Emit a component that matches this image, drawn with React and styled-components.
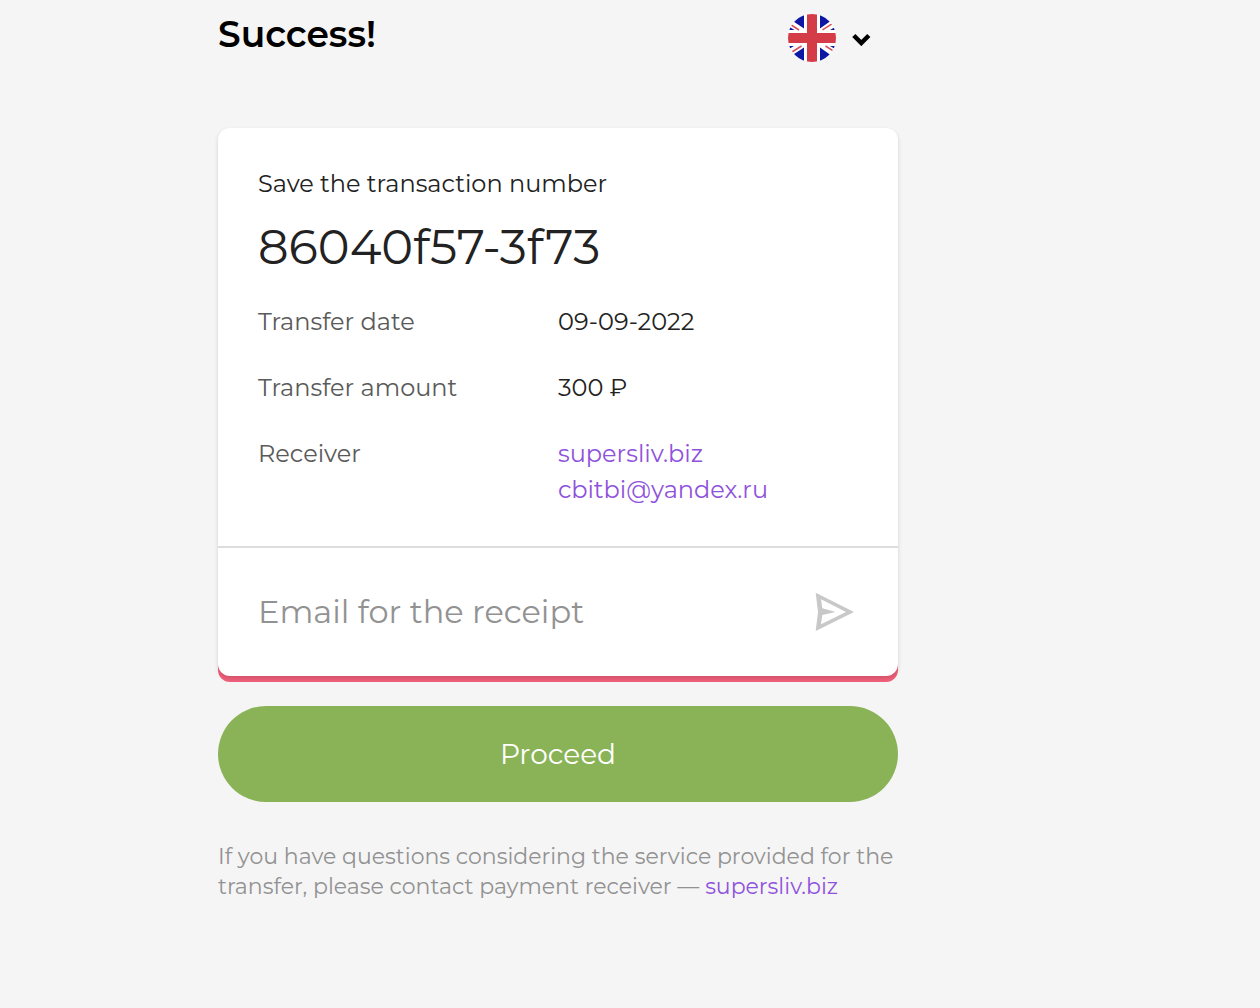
import styled, { createGlobalStyle } from 'styled-components'

const GlobalStyle = createGlobalStyle`
	* {
		box-sizing: border-box;
	}
	body {
		margin: 0;
		background-color: #f5f5f5;
		color: #222;
		font-family: Montserrat, Inter, sans-serif;
		font-size: 24px;
		line-height: 36px;
	}
`
const Page = styled.main`
	max-width: 898px;
	padding: 14px 0 40px 218px;
`
const Header = styled.header`
	display: flex;
	justify-content: space-between;
	margin-bottom: 66px;
`
const Title = styled.h1`
	margin: 0;
	color: #000;
	font-size: 36px;
	font-weight: 600;
	line-height: 40px;
`
const LangButton = styled.button`
	display: flex;
	align-items: center;
	gap: 16px;
	padding: 0 26px 0 0;
	border: none;
	background: none;
	cursor: pointer;
`
const Card = styled.section`
	border-radius: 12px;
	background-color: #fff;
	box-shadow: 0 2px 4px rgba(0, 0, 0, 0.15), 0 6px 0 #f0607a;
`
const Details = styled.div`
	padding: 38px 40px;
`
const Caption = styled.p`
	margin: 0 0 16px;
`
const TransactionNumber = styled.p`
	margin: 0 0 28px;
	font-size: 48px;
	line-height: 58px;
`
const Rows = styled.dl`
	display: grid;
	grid-template-columns: 1fr 1fr;
	row-gap: 30px;
	margin: 0;
`
const Label = styled.dt`
	color: #5a5a5a;
`
const Value = styled.dd`
	margin: 0;
`
const PurpleLink = styled.a`
	display: ${props => (props.$block ? 'block' : 'inline')};
	color: #8f52dc;
	text-decoration: none;
`
const ReceiptForm = styled.form`
	display: flex;
	align-items: center;
	padding: 40px;
	border-top: 2px solid #ddd;
`
const EmailInput = styled.input`
	flex: 1;
	min-width: 0;
	height: 48px;
	padding: 0 0 2px;
	border: none;
	outline: none;
	background: none;
	color: #222;
	font: inherit;
	font-size: 32px;
	&::placeholder {
		color: #929292;
		opacity: 1;
	}
`
const SendButton = styled.button`
	display: flex;
	padding: 0;
	border: none;
	background: none;
	cursor: pointer;
`
const ProceedButton = styled.button`
	width: 100%;
	height: 96px;
	margin-top: 30px;
	border: none;
	border-radius: 48px;
	background-color: #8ab357;
	color: #fff;
	font: inherit;
	font-size: 28px;
	cursor: pointer;
`
const Note = styled.p`
	margin: 40px 0 0;
	color: #929292;
	font-size: 22px;
	line-height: 30px;
`

const FlagIcon = () => (
	<svg width="48" height="48" viewBox="0 0 48 48" aria-hidden="true">
		<clipPath id="round">
			<circle cx="24" cy="24" r="24" />
		</clipPath>
		<g clipPath="url(#round)">
			<path fill="#fff" d="M0 0h48v48H0z" />
			<path
				fill="#0d17a3"
				d="M16 0v14.5L4 6.5V0zM32 0v14.5L44 6V0zM16 48V33.5L3 42v6zM32 48V33.5L44 42v6zM0 12l6.500 4H0zM48 12.500l-6 3.500h6zM0 35.500l6-3.500H0zM48 35.500l-6-3.500h6z"
			/>
			<path
				stroke="#d8505a"
				strokeWidth="1.5"
				d="M2.500 10.500l8.500 5.500M34.500 15.800l9.500-6M4 38l9.500-6M37.500 32l8 5.200"
			/>
			<path fill="#d43d47" d="M19 0h10v19h19v10H29v19H19V29H0V19h19z" />
		</g>
	</svg>
)

const ChevronIcon = () => (
	<svg width="20" height="16" viewBox="0 0 20 16" aria-hidden="true">
		<path
			fill="none"
			stroke="#000"
			strokeWidth="4.500"
			d="M1.800 5.500l7.500 7.500 7.500-7.500"
		/>
	</svg>
)

const SendIcon = () => (
	<svg width="44" height="44" viewBox="0 0 44 44" aria-hidden="true">
		<path
			fill="#c8c8c8"
			fillRule="evenodd"
			d="M1.700 2.700L40 21.900 1.700 41 4 22zM7 9.300l1.300 9 13.400 3.700-13.400 3L7 34.300 32 22z"
		/>
	</svg>
)

const details = [
	{ label: 'Transfer date', value: '09-09-2022' },
	{ label: 'Transfer amount', value: '300 ₽' },
]

const App = () => {
	return (
		<>
			<GlobalStyle />
			<Page>
				<Header>
					<Title>Success!</Title>
					<LangButton type="button" aria-label="Language: English">
						<FlagIcon />
						<ChevronIcon />
					</LangButton>
				</Header>

				<Card>
					<Details>
						<Caption>Save the transaction number</Caption>
						<TransactionNumber>86040f57-3f73</TransactionNumber>
						<Rows>
							{details.map(({ label, value }) => [
								<Label key={label}>{label}</Label>,
								<Value key={value}>{value}</Value>,
							])}
							<Label>Receiver</Label>
							<Value>
								<PurpleLink $block href="#site">
									supersliv.biz
								</PurpleLink>
								<PurpleLink $block href="mailto:cbitbi@yandex.ru">
									cbitbi@yandex.ru
								</PurpleLink>
							</Value>
						</Rows>
					</Details>
					<ReceiptForm onSubmit={e => e.preventDefault()}>
						<EmailInput
							type="email"
							aria-label="Email for the receipt"
							placeholder="Email for the receipt"
						/>
						<SendButton aria-label="Send">
							<SendIcon />
						</SendButton>
					</ReceiptForm>
				</Card>

				<ProceedButton type="button">Proceed</ProceedButton>
				<Note>
					If you have questions considering the service provided for the
					transfer, please contact payment receiver —{' '}
					<PurpleLink href="#site">supersliv.biz</PurpleLink>
				</Note>
			</Page>
		</>
	)
}

export default App
